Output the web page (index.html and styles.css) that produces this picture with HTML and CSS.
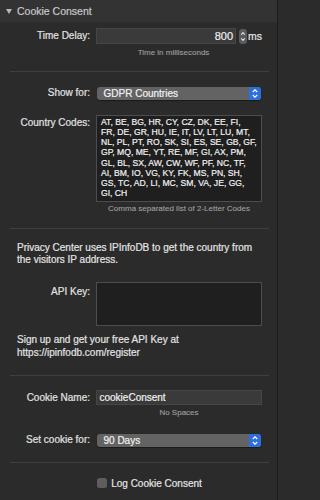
FILE: index.html
```html
<!DOCTYPE html>
<html>
<head>
<meta charset="utf-8">
<link rel="stylesheet" href="styles.css">
</head>
<body>
<div class="panel">
  <div class="header">
    <svg class="disclosure" width="6" height="5" viewBox="0 0 6 5"><polygon points="0,0 6,0 3,5" fill="#b9b9b9"/></svg>
    <span>Cookie Consent</span>
  </div>

  <div class="row r-time">
    <div class="label">Time Delay:</div>
    <div class="field">
      <div class="input num">800</div>
      <svg class="stepper" width="8" height="15" viewBox="0 0 8 15">
        <rect x="0" y="0" width="8" height="15" rx="3" fill="#5a5a5a"/>
        <polyline points="2.2,5.6 4,3.6 5.8,5.6" fill="none" stroke="#e2e2e2" stroke-width="1.1"/>
        <polyline points="2.2,9.4 4,11.4 5.8,9.4" fill="none" stroke="#e2e2e2" stroke-width="1.1"/>
      </svg>
      <span class="unit">ms</span>
    </div>
  </div>
  <div class="hint h-time">Time in milliseconds</div>

  <div class="sep s1"></div>

  <div class="row r-show">
    <div class="label">Show for:</div>
    <div class="select">
      <span class="select-text">GDPR Countries</span>
      <span class="select-btn">
        <svg width="12" height="13" viewBox="0 0 12 13">
          <polyline points="3.8,5 6,2.9 8.2,5" fill="none" stroke="#fff" stroke-width="1.2"/>
          <polyline points="3.8,8 6,10.1 8.2,8" fill="none" stroke="#fff" stroke-width="1.2"/>
        </svg>
      </span>
    </div>
  </div>

  <div class="row r-codes">
    <div class="label">Country Codes:</div>
    <div class="textarea codes">AT, BE, BG, HR, CY, CZ, DK, EE, FI,<br>FR, DE, GR, HU, IE, IT, LV, LT, LU, MT,<br>NL, PL, PT, RO, SK, SI, ES, SE, GB, GF,<br>GP, MQ, ME, YT, RE, MF, GI, AX, PM,<br>GL, BL, SX, AW, CW, WF, PF, NC, TF,<br>AI, BM, IO, VG, KY, FK, MS, PN, SH,<br>GS, TC, AD, LI, MC, SM, VA, JE, GG,<br>GI, CH</div>
  </div>
  <div class="hint h-codes">Comma separated list of 2-Letter Codes</div>

  <div class="sep s2"></div>

  <p class="para p1">Privacy Center uses IPInfoDB to get the country from the visitors IP address.</p>

  <div class="row r-api">
    <div class="label">API Key:</div>
    <div class="textarea api"></div>
  </div>

  <p class="para p2">Sign up and get your free API Key at https://ipinfodb.com/register</p>

  <div class="sep s3"></div>

  <div class="row r-name">
    <div class="label">Cookie Name:</div>
    <div class="input text">cookieConsent</div>
  </div>
  <div class="hint h-name">No Spaces</div>

  <div class="row r-cookie">
    <div class="label">Set cookie for:</div>
    <div class="select">
      <span class="select-text">90 Days</span>
      <span class="select-btn">
        <svg width="12" height="13" viewBox="0 0 12 13">
          <polyline points="3.8,5 6,2.9 8.2,5" fill="none" stroke="#fff" stroke-width="1.2"/>
          <polyline points="3.8,8 6,10.1 8.2,8" fill="none" stroke="#fff" stroke-width="1.2"/>
        </svg>
      </span>
    </div>
  </div>

  <div class="sep s4"></div>

  <div class="row r-check">
    <div class="label"></div>
    <div class="check-wrap">
      <span class="checkbox"></span>
      <span class="check-label">Log Cookie Consent</span>
    </div>
  </div>
</div>
</body>
</html>
```

FILE: styles.css
```css
html, body {
  margin: 0;
  padding: 0;
  background: #2b2b2b;
}

body {
  width: 280px;
  height: 500px;
  overflow: hidden;
  font-family: "Liberation Sans", Arial, sans-serif;
  color: #dcdcdc;
  -webkit-text-stroke: 0.2px currentColor;
}

.panel {
  width: 277px;
  height: 500px;
  border-right: 1px solid #1c1c1c;
}

.header {
  height: 22px;
  background: #333333;
  display: flex;
  align-items: center;
  gap: 5px;
  padding-left: 6px;
  font-size: 10.5px;
  color: #c8c8c8;
}

.disclosure {
  display: block;
}

.row {
  display: grid;
  grid-template-columns: 90px 166px;
  column-gap: 6px;
  align-items: center;
}

.label {
  text-align: right;
  font-size: 10px;
  line-height: 12px;
  color: #e2e2e2;
  white-space: nowrap;
}

.field {
  display: flex;
  align-items: center;
  white-space: nowrap;
}

.input {
  box-sizing: border-box;
  background: #3a3a3a;
  border: 1px solid #464646;
  color: #f0f0f0;
  font-size: 10px;
  display: flex;
  align-items: center;
}

.input.num {
  width: 155px;
  height: 16px;
  justify-content: flex-end;
  padding-right: 1.5px;
  font-size: 11px;
}

.input.text {
  height: 15px;
  padding-left: 2.5px;
}

.stepper {
  display: block;
  margin-left: 3.5px;
  flex: none;
}

.unit {
  margin-left: 1px;
  font-size: 10.5px;
  color: #e6e6e6;
}

.hint {
  font-size: 8px;
  line-height: 10px;
  color: #a0a0a0;
  text-align: center;
  margin-left: 96px;
  width: 166px;
  -webkit-text-stroke: 0.1px currentColor;
}

.sep {
  height: 1px;
  background: #3f3f3f;
  margin-left: 10px;
  width: 259px;
}

.select {
  box-sizing: border-box;
  margin-left: 1px;
  width: 164px;
  height: 13.5px;
  background: #636363;
  border-radius: 3px;
  display: flex;
  align-items: center;
  justify-content: space-between;
  box-shadow: 0 0.5px 1px rgba(0, 0, 0, 0.4);
}

.select-text {
  padding-left: 6.5px;
  font-size: 10px;
  color: #f2f2f2;
}

.select-btn {
  width: 12px;
  height: 13.5px;
  background: #2d6fde;
  border-radius: 0 3px 3px 0;
  display: flex;
  align-items: center;
  justify-content: center;
}

.select-btn svg {
  display: block;
}

.textarea {
  box-sizing: border-box;
  background: #1f1f1f;
  border: 1px solid #4d4d4d;
}

.codes {
  height: 87px;
  padding: 1px 0 0 4px;
  font-size: 8.6px;
  line-height: 10.1px;
  color: #f2f2f2;
  white-space: nowrap;
}

.api {
  height: 44px;
}

.para {
  margin: 0;
  padding: 0 15px 0 17px;
  font-size: 10px;
  line-height: 12.3px;
  color: #e4e4e4;
}

.check-wrap {
  display: flex;
  align-items: center;
  gap: 4.5px;
}

.checkbox {
  display: block;
  width: 10px;
  height: 10px;
  margin-left: 0.7px;
  border-radius: 2.5px;
  background: #5d5d5d;
}

.check-label {
  font-size: 10px;
  color: #e4e4e4;
}

/* vertical rhythm */
.r-time { margin-top: 6px; }
.h-time { margin-top: 4px; width: 155px; }
.s1 { margin-top: 13px; }
.r-show { margin-top: 14.7px; }
.r-codes { margin-top: 15px; align-items: start; }
.r-codes .label { padding-top: 2px; }
.h-codes { margin-top: 2px; }
.s2 { margin-top: 13.5px; }
.p1 { margin-top: 13px; }
.r-api { margin-top: 16px; align-items: start; }
.r-api .label { padding-top: 3.5px; }
.p2 { margin-top: 8px; }
.s3 { margin-top: 16.5px; }
.r-name { margin-top: 14px; }
.h-name { margin-top: 3px; }
.r-cookie { margin-top: 15.3px; }
.s4 { margin-top: 15px; }
.r-check { margin-top: 14.5px; }
```
